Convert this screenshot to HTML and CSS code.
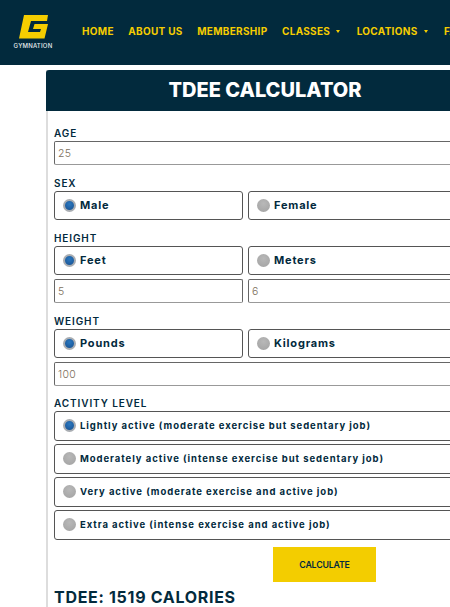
FILE: index.html
```html
<!DOCTYPE html>
<html lang="en">
  <head>
    <meta charset="UTF-8" />
    <meta name="viewport" content="width=device-width, initial-scale=1.0" />
    <title>TDEE Calculator</title>
    <link rel="stylesheet" href="styles.css">
  </head>
  <body>
    <header class="top">
      <a class="logo" href="#">
        <svg class="logo-mark" width="30" height="24" viewBox="0 0 30 24">
          <path fill="#f5cd00" d="M5 0H29L28 6H12L9 17H21L22 14H14L15.500 9H29L25.500 23.500H0Z" />
        </svg>
        <span class="logo-name">GYMNATION</span>
      </a>
      <nav class="menu">
        <a href="#">HOME</a>
        <a href="#">ABOUT US</a>
        <a href="#">MEMBERSHIP</a>
        <a class="drop" href="#">CLASSES</a>
        <a class="drop" href="#">LOCATIONS</a>
        <a href="#">FAQ</a>
      </nav>
    </header>

    <main class="card">
      <h1 class="card-title">TDEE CALCULATOR</h1>
      <form class="calc">
        <label class="field-label first">AGE</label>
        <input class="text-box" type="text" value="25" />

        <label class="field-label">SEX</label>
        <div class="two">
          <div class="choice"><span class="dot on"></span>Male</div>
          <div class="choice"><span class="dot"></span>Female</div>
        </div>

        <label class="field-label">HEIGHT</label>
        <div class="two">
          <div class="choice"><span class="dot on"></span>Feet</div>
          <div class="choice"><span class="dot"></span>Meters</div>
        </div>
        <div class="two under">
          <input class="text-box" type="text" value="5" />
          <input class="text-box" type="text" value="6" />
        </div>

        <label class="field-label">WEIGHT</label>
        <div class="two">
          <div class="choice"><span class="dot on"></span>Pounds</div>
          <div class="choice"><span class="dot"></span>Kilograms</div>
        </div>
        <input class="text-box under" type="text" value="100" />

        <label class="field-label tight">ACTIVITY LEVEL</label>
        <div class="levels">
          <div class="choice small"><span class="dot on"></span>Lightly active (moderate exercise but sedentary job)</div>
          <div class="choice small"><span class="dot"></span>Moderately active (intense exercise but sedentary job)</div>
          <div class="choice small"><span class="dot"></span>Very active (moderate exercise and active job)</div>
          <div class="choice small"><span class="dot"></span>Extra active (intense exercise and active job)</div>
        </div>

        <button class="calc-btn" type="button">CALCULATE</button>
        <h2 class="result">TDEE: 1519 CALORIES</h2>
      </form>
    </main>
  </body>
</html>
```

FILE: styles.css
```css
* {
  box-sizing: border-box;
  margin: 0;
  padding: 0;
}
html,
body {
  height: 607px;
  overflow: hidden;
  background-color: #fff;
}
body {
  font-family: "Inter", "Liberation Sans", sans-serif;
  color: #022a3d;
}

/* top bar */
.top {
  display: flex;
  height: 65px;
  background-color: #022a3d;
  padding-left: 13px;
  width: 600px;
}
.logo {
  display: flex;
  flex-direction: column;
  align-items: center;
  width: 40px;
  padding-top: 15px;
  text-decoration: none;
}
.logo-mark {
  margin-left: 2px;
}
.logo-name {
  margin-top: 3px;
  font-size: 6px;
  font-weight: 500;
  letter-spacing: 0.2px;
  color: #e8eef0;
  white-space: nowrap;
}
.menu {
  display: flex;
  gap: 14.500px;
  margin-left: 29px;
  padding-top: 25px;
  font-size: 10px;
  font-weight: 700;
  letter-spacing: 0.3px;
}
.menu a {
  color: #f5cd00;
  text-decoration: none;
  white-space: nowrap;
}
.menu .drop {
  margin-right: 2px;
}
.menu .drop::after {
  content: "";
  display: inline-block;
  margin-left: 6px;
  vertical-align: 2px;
  border-top: 3px solid #f5cd00;
  border-left: 2.500px solid transparent;
  border-right: 2.500px solid transparent;
}

/* calculator card */
.card {
  width: 438px;
  margin: 5px 0 0 46px;
  border-left: 2px solid #ddd;
}
.card-title {
  height: 41px;
  margin-left: -2px;
  border-radius: 3px 3px 0 0;
  background-color: #022a3d;
  color: #fff;
  font-size: 20px;
  font-weight: 800;
  line-height: 40px;
  text-align: center;
}
.calc {
  padding: 0 0 0 6px;
}
.field-label {
  display: block;
  height: 12px;
  margin: 12px 0 2px;
  font-size: 10px;
  font-weight: 600;
  line-height: 12px;
  letter-spacing: 0.9px;
}
.field-label.first {
  margin-top: 16px;
}
.field-label.tight {
  margin-top: 11px;
}
.text-box {
  display: block;
  width: 100%;
  height: 24px;
  border: 1px solid #666;
  border-bottom-color: #999;
  border-radius: 2px;
  padding: 0 3px;
  background-color: #fff;
  font-family: "Inter", sans-serif;
  font-size: 10.500px;
  font-weight: 300;
  letter-spacing: 0.3px;
  color: #7d6f5c;
}
.two {
  display: grid;
  grid-template-columns: 189px 1fr;
  gap: 5px;
}
.under {
  margin-top: 4px;
}
.choice {
  display: flex;
  align-items: center;
  gap: 4px;
  height: 29px;
  border: 1px solid #555;
  border-radius: 3px;
  padding: 0 0 1px 8px;
  font-size: 11px;
  font-weight: 700;
  letter-spacing: 0.8px;
  white-space: nowrap;
}
.choice.small {
  height: 30px;
  font-size: 9.500px;
  letter-spacing: 0.95px;
}
.dot {
  flex: none;
  width: 13px;
  height: 13px;
  border-radius: 50%;
  background: radial-gradient(circle at 50% 35%, #b8b8b8, #a2a2a2);
}
.dot.on {
  border: 2px solid #a9adb2;
  background: radial-gradient(circle at 50% 35%, #2a78c0, #174f8e);
}
.levels {
  display: flex;
  flex-direction: column;
  gap: 3px;
}
.calc-btn {
  display: block;
  width: 103px;
  height: 35px;
  margin: 7px 0 0 219px;
  border: none;
  background-color: #f3cd00;
  color: #022a3d;
  font-family: "Inter", sans-serif;
  font-size: 8.800px;
  font-weight: 600;
  letter-spacing: -0.2px;
}
.result {
  margin-top: 5px;
  font-size: 16px;
  font-weight: 700;
  letter-spacing: 0.7px;
  white-space: nowrap;
}
```
